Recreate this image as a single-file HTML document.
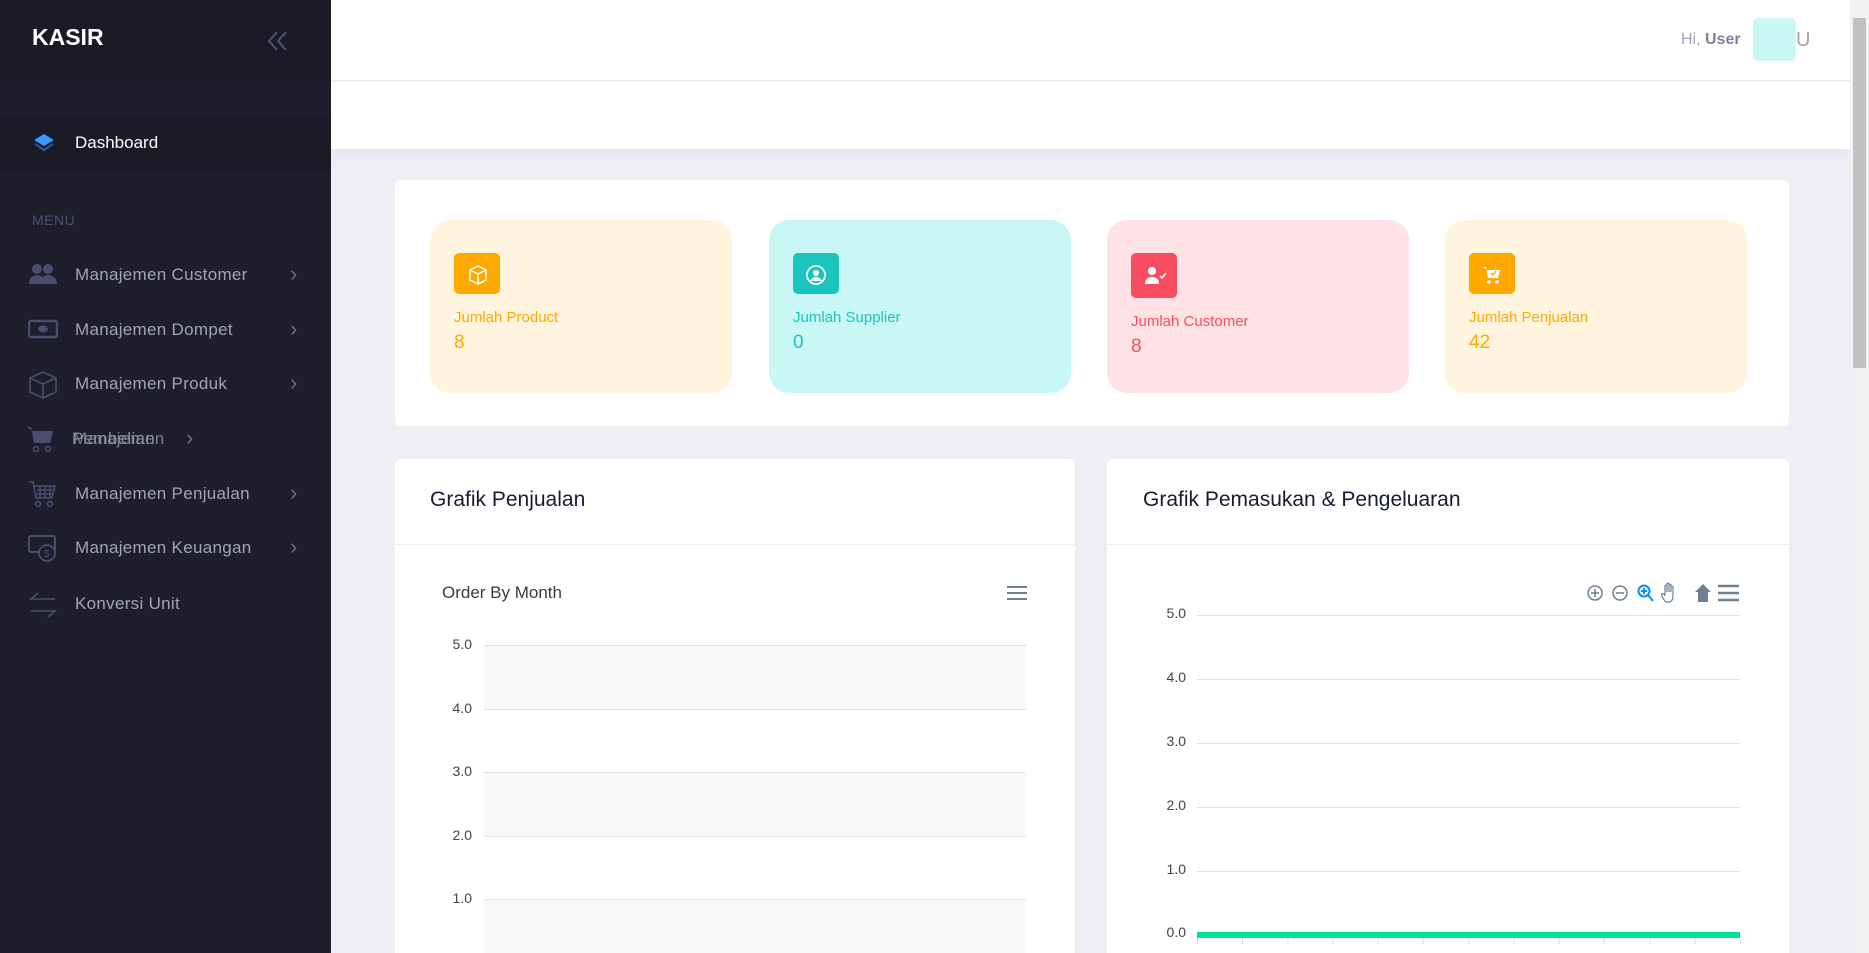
<!DOCTYPE html>
<html style="width:1869px;height:953px;overflow:hidden"><head><meta charset="utf-8"><style>
*{box-sizing:border-box;margin:0;padding:0}
body{width:1869px;height:953px;overflow:hidden;background:#eeeef5;font-family:"Liberation Sans",sans-serif;position:relative}
.sb{position:absolute;left:0;top:0;width:331px;height:953px;background:#1e1e2d}
.sbh{height:81px;background:#1b1b28;position:relative}
.logo{position:absolute;left:32px;top:24px;color:#fff;font-weight:bold;font-size:23px}
.dash{position:absolute;top:116px;left:0;width:331px;height:54px;background:#1b1b28}
.dash span{position:absolute;left:75px;top:17px;color:#fff;font-size:17px}
.menu{position:absolute;left:32px;top:212px;color:#4c4e6f;font-size:14px;letter-spacing:.5px}
.it{position:absolute;left:0;width:331px;height:30px}
.it .t{position:absolute;left:75px;top:4px;color:#a2a3b7;font-size:17px;letter-spacing:.3px}
.it .c{position:absolute;left:290px;top:0px;color:#6d6e86;font-size:22px}
.it svg{position:absolute;left:28px;top:0}
.hdr{position:absolute;left:331px;top:0;width:1519px;height:81px;background:#fff;border-bottom:1px solid #ebedf3}
.sub{position:absolute;left:331px;top:82px;width:1519px;height:67px;background:#fff;box-shadow:0 6px 10px rgba(80,80,130,.06)}
.scroll{position:absolute;right:0;top:0;width:19px;height:953px;background:#f1f1f1}
.scroll div{position:absolute;left:3px;top:18px;width:13px;height:350px;background:#c1c1c1}
.panel{position:absolute;background:#fff;border-radius:6px}
.st{position:absolute;top:220px;width:302px;height:173px;border-radius:20px}
.st .ic{position:absolute;left:24px;top:33px;width:46px;height:41px;border-radius:5px}
.st .l{position:absolute;left:24px;top:89px;font-size:15px}
.st .v{position:absolute;left:24px;top:112px;font-size:19px}
.ct{position:absolute;font-size:21px;color:#181c32}
.yl{position:absolute;font-size:14px;color:#444;text-align:right;width:40px}
.gl{position:absolute;height:1px;background:#e0e0e0}
</style></head><body>
<div class="sb">
 <div class="sbh"><div class="logo">KASIR</div>
 <svg style="position:absolute;left:266px;top:30px" width="24" height="22" viewBox="0 0 24 22"><path d="M11 2 L3 11 L11 20 M20 2 L12 11 L20 20" stroke="#4c4e6f" stroke-width="2.2" fill="none"/></svg></div>
 <div class="dash"><svg style="position:absolute;left:32px;top:15px" width="24" height="24" viewBox="0 0 24 24"><path d="M12 3 L22 9 L12 15 L2 9Z" fill="#3699ff"/><path d="M3 13 L12 19 L21 13" stroke="#3699ff" stroke-width="2" fill="none" opacity=".5"/></svg><span>Dashboard</span></div>
 <div class="menu">MENU</div>
 <div class="it" style="top:261px"><svg width="30" height="26" viewBox="0 0 30 26"><circle cx="9" cy="8" r="5" fill="#4c4e6f"/><circle cx="20" cy="8" r="5" fill="#4c4e6f"/><path d="M1 23c0-6 4-9 8-9s8 3 8 9zM12 23c0-6 4-9 8-9s9 3 9 9z" fill="#4c4e6f"/></svg><span class="t">Manajemen Customer</span><span class="c">›</span></div>
 <div class="it" style="top:316px"><svg width="30" height="26" viewBox="0 0 30 26"><rect x="1" y="5" width="28" height="16" rx="2" fill="none" stroke="#4c4e6f" stroke-width="2.5"/><ellipse cx="15" cy="13" rx="5" ry="3.5" fill="#4c4e6f"/></svg><span class="t">Manajemen Dompet</span><span class="c">›</span></div>
 <div class="it" style="top:370px"><svg width="30" height="30" viewBox="0 0 30 30"><path d="M2 8 L15 2 L28 8 L28 22 L15 28 L2 22Z M2 8 L15 14 L28 8 M15 14 L15 28" stroke="#4c4e6f" stroke-width="1.6" fill="none"/></svg><span class="t">Manajemen Produk</span><span class="c">›</span></div>
 <div class="it" style="top:425px"><svg style="left:26px" width="30" height="28" viewBox="0 0 30 28"><path d="M1 2 L5 2 L8 18 L24 18 L27 6 L6 6Z" fill="#4c4e6f"/><circle cx="10" cy="24" r="2.5" stroke="#4c4e6f" stroke-width="1.5" fill="none"/><circle cx="22" cy="24" r="2.5" stroke="#4c4e6f" stroke-width="1.5" fill="none"/></svg><span class="t" style="left:73px;color:#7c7d93">Manajemen</span><span class="t" style="left:72px;color:#8b8ca3">Pembelian</span><span class="c" style="left:186px">›</span></div>
 <div class="it" style="top:480px"><svg width="30" height="28" viewBox="0 0 30 28"><path d="M1 2 L5 2 L8 18 L24 18 L27 6 L6 6 M9 10 L26 10 M8 14 L25 14 M12 6 L12 18 M17 6 L17 18 M22 6 L22 18" stroke="#4c4e6f" stroke-width="1.5" fill="none"/><circle cx="10" cy="24" r="2.5" stroke="#4c4e6f" stroke-width="1.5" fill="none"/><circle cx="22" cy="24" r="2.5" stroke="#4c4e6f" stroke-width="1.5" fill="none"/></svg><span class="t">Manajemen Penjualan</span><span class="c">›</span></div>
 <div class="it" style="top:534px"><svg width="30" height="30" viewBox="0 0 30 30"><rect x="1" y="2" width="26" height="16" rx="2" fill="none" stroke="#4c4e6f" stroke-width="2"/><circle cx="19" cy="19" r="8" fill="#1e1e2d" stroke="#4c4e6f" stroke-width="1.8"/><text x="16" y="23" font-size="10" fill="#4c4e6f">$</text></svg><span class="t">Manajemen Keuangan</span><span class="c">›</span></div>
 <div class="it" style="top:590px"><svg width="30" height="30" viewBox="0 0 30 30"><path d="M10 3 L3 9 L27 9 M20 27 L27 21 L3 21" stroke="#4c4e6f" stroke-width="1.6" fill="none"/></svg><span class="t">Konversi Unit</span></div>
</div>
<div class="hdr"><span style="position:absolute;left:1350px;top:31px;font-size:16px;color:#a2a3b7">Hi, <b style="color:#7e8299">User</b></span><div style="position:absolute;left:1422px;top:18px;width:43px;height:43px;background:#c9f7f5;border-radius:5px"></div><span style="position:absolute;left:1465px;top:29px;font-size:20px;color:#a2a3b7">U</span></div>
<div class="sub"></div>
<div class="scroll"><div></div></div>
<div class="panel" style="left:395px;top:180px;width:1394px;height:246px"></div>
<div class="st" style="left:430px;background:#fff4de"><div class="ic" style="background:#ffa800"></div><div class="l" style="color:#ffa800">Jumlah Product</div><div class="v" style="color:#ffa800">8</div></div>
<div class="st" style="left:769px;background:#c9f7f5"><div class="ic" style="background:#1bc5bd"></div><div class="l" style="color:#1bc5bd">Jumlah Supplier</div><div class="v" style="color:#1bc5bd">0</div></div>
<div class="st" style="left:1107px;background:#ffe2e5"><div class="ic" style="background:#f64e60;height:45px"></div><div class="l" style="color:#f64e60;top:93px">Jumlah Customer</div><div class="v" style="color:#f64e60;top:116px">8</div></div>
<div class="st" style="left:1445px;background:#fff4de"><div class="ic" style="background:#ffa800"></div><div class="l" style="color:#ffa800">Jumlah Penjualan</div><div class="v" style="color:#ffa800">42</div></div>
<svg style="position:absolute;left:466px;top:263px" width="24" height="24" viewBox="0 0 24 24"><path d="M4 7 L12 3 L20 7 L20 17 L12 21 L4 17Z M4 7 L12 11 L20 7 M12 11 L12 21" stroke="#fff" stroke-width="1.5" fill="none"/></svg>
<svg style="position:absolute;left:804px;top:263px" width="24" height="24" viewBox="0 0 24 24"><circle cx="12" cy="12" r="9" stroke="#fff" stroke-width="1.8" fill="none"/><circle cx="12" cy="10" r="3" fill="#fff"/><path d="M6.5 18c1-3 3-4 5.5-4s4.5 1 5.5 4" fill="#fff"/></svg>
<svg style="position:absolute;left:1143px;top:264px" width="26" height="24" viewBox="0 0 26 24"><circle cx="9" cy="7" r="4" fill="#fff"/><path d="M2 20c0-5 3-7 7-7s7 2 7 7z" fill="#fff"/><path d="M17 12 L19 14 L23 9" stroke="#fff" stroke-width="1.5" fill="none"/></svg>
<svg style="position:absolute;left:1480px;top:263px" width="24" height="24" viewBox="0 0 24 24"><path d="M3 4 L6 4 L8 15 L18 15 L20 7 L7 7Z" fill="#fff"/><circle cx="9" cy="19" r="1.8" fill="#fff"/><circle cx="17" cy="19" r="1.8" fill="#fff"/><path d="M11 10 L13 12 L16 8" stroke="#ffa800" stroke-width="1.4" fill="none"/></svg>
<div class="panel" style="left:395px;top:459px;width:680px;height:494px;border-radius:6px 6px 0 0"></div>
<div class="panel" style="left:1107px;top:459px;width:682px;height:494px;border-radius:6px 6px 0 0"></div>
<div style="position:absolute;left:395px;top:544px;width:680px;height:1px;background:#ebedf3"></div>
<div style="position:absolute;left:1107px;top:544px;width:682px;height:1px;background:#ebedf3"></div>
<div class="ct" style="left:430px;top:488px">Grafik Penjualan</div>
<div class="ct" style="left:1143px;top:488px">Grafik Pemasukan &amp; Pengeluaran</div>
<div style="position:absolute;left:442px;top:583px;font-size:17px;color:#373d3f">Order By Month</div>
<svg style="position:absolute;left:1007px;top:585px" width="20" height="16"><path d="M0 2H20M0 8H20M0 14H20" stroke="#6e8192" stroke-width="2"/></svg>
<div style="position:absolute;left:484px;top:645px;width:542px;height:64px;background:#f8f8f8"></div>
<div style="position:absolute;left:484px;top:772px;width:542px;height:64px;background:#f8f8f8"></div>
<div style="position:absolute;left:484px;top:899px;width:542px;height:54px;background:#f8f8f8"></div>
<div class="gl" style="left:484px;top:645px;width:542px"></div><div class="gl" style="left:484px;top:709px;width:542px"></div><div class="gl" style="left:484px;top:772px;width:542px"></div><div class="gl" style="left:484px;top:836px;width:542px"></div><div class="gl" style="left:484px;top:899px;width:542px"></div>
<div class="yl" style="left:432px;top:636px">5.0</div><div class="yl" style="left:432px;top:700px">4.0</div><div class="yl" style="left:432px;top:763px">3.0</div><div class="yl" style="left:432px;top:827px">2.0</div><div class="yl" style="left:432px;top:890px">1.0</div>
<div class="gl" style="left:1197px;top:615px;width:543px"></div><div class="gl" style="left:1197px;top:679px;width:543px"></div><div class="gl" style="left:1197px;top:743px;width:543px"></div><div class="gl" style="left:1197px;top:807px;width:543px"></div><div class="gl" style="left:1197px;top:871px;width:543px"></div>
<div style="position:absolute;left:1197px;top:932px;width:543px;height:6px;background:#00e396"></div>
<svg style="position:absolute;left:1197px;top:938px" width="544" height="6"><path d="M0.5 0V6M45.5 0V6M91 0V6M136 0V6M181 0V6M226 0V6M272 0V6M317 0V6M362 0V6M407 0V6M453 0V6M498 0V6M543.5 0V6" stroke="#ddd"/></svg>
<div class="yl" style="left:1146px;top:605px">5.0</div><div class="yl" style="left:1146px;top:669px">4.0</div><div class="yl" style="left:1146px;top:733px">3.0</div><div class="yl" style="left:1146px;top:797px">2.0</div><div class="yl" style="left:1146px;top:861px">1.0</div><div class="yl" style="left:1146px;top:924px">0.0</div>
<svg style="position:absolute;left:1585px;top:582px" width="156" height="22" viewBox="0 0 156 22"><g stroke="#6e8192" stroke-width="1.5" fill="none"><circle cx="10" cy="11" r="7"/><path d="M10 7V15M6 11H14"/><circle cx="35" cy="11" r="7"/><path d="M31 11H39"/></g><g stroke="#008ffb" stroke-width="2" fill="none"><circle cx="59" cy="9" r="5.5"/><path d="M63 13L68 19M59 6V12M56 9H62"/></g><path d="M81 20C77 16 76 13 77 12s3 1 3 2V4c0-1 2-1 2 0v6V2c0-1 2-1 2 0v8V3c0-1 2-1 2 0v7V5c0-1 2-1 2 0v9c0 4-2 6-4 6z" stroke="#6e8192" stroke-width="1.2" fill="#fff"/><path d="M118 2L110 10H113V20H123V10H126Z" fill="#6e8192"/><path d="M133 4H154M133 11H154M133 18H154" stroke="#6e8192" stroke-width="2.5"/></svg>
</body></html>
